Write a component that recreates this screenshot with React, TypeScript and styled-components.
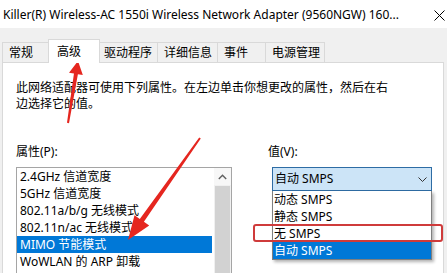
import React from "react";
import styled, { createGlobalStyle } from "styled-components";

const Global = createGlobalStyle`
  html, body { margin: 0; padding: 0; background: #f0f0f0; overflow: hidden; }
  * { box-sizing: border-box; }
`;

const Window = styled.div`
  position: relative;
  width: 447px;
  height: 273px;
  overflow: hidden;
  display: flex;
  flex-direction: column;
  background: #f0f0f0;
  color: #000;
  font-family: "Noto Sans", "Noto Sans CJK SC", sans-serif;
  font-size: 12px;
`;

const TitleBar = styled.div`
  height: 28px;
  flex: none;
  background: #fff;
  display: flex;
  align-items: center;
  justify-content: space-between;
  padding: 2px 2px 0 3px;
`;

const Title = styled.div`
  line-height: 16px;
  white-space: nowrap;
`;

const Close = styled.div`
  width: 12px;
  height: 12px;
  display: flex;
  align-items: center;
  justify-content: center;
`;

const TabStrip = styled.div`
  height: 34px;
  flex: none;
  display: flex;
  align-items: flex-end;
  padding-left: 2px;
  position: relative;
  z-index: 1;
`;

const Tab = styled.div<{ $w: number; $active?: boolean }>`
  width: ${(p) => (p.$active ? p.$w + 4 : p.$w)}px;
  height: ${(p) => (p.$active ? 24 : 20)}px;
  margin: 0 ${(p) => (p.$active ? -3 : -1)}px ${(p) => (p.$active ? -1 : 0)}px
    ${(p) => (p.$active ? -2 : 0)}px;
  padding-left: ${(p) => (p.$active ? 8 : 6)}px;
  border: 1px solid #d9d9d9;
  border-bottom: none;
  background: ${(p) => (p.$active ? "#fff" : "#f0f0f0")};
  display: flex;
  align-items: center;
  line-height: 16px;
  white-space: nowrap;
  position: relative;
  z-index: ${(p) => (p.$active ? 2 : 1)};
`;

const Panel = styled.div`
  flex: 1;
  margin: 0 3px 0 2px;
  border: 1px solid #d9d9d9;
  background: #fff;
  padding: 17px 12px 0 13px;
`;

const Description = styled.p`
  margin: 0;
  width: 376px;
  line-height: 16px;
`;

const Form = styled.div`
  display: flex;
  gap: 36px;
  margin-top: 32px;
`;

const Column = styled.div<{ $w?: number }>`
  display: flex;
  flex-direction: column;
  position: relative;
  width: ${(p) => (p.$w ? `${p.$w}px` : "auto")};
`;

const Label = styled.div`
  line-height: 16px;
  margin-bottom: 7px;
`;

const ListBox = styled.div`
  width: 216px;
  height: 140px;
  border: 1px solid #a5a5a5;
  display: flex;
`;

const ListItems = styled.div`
  flex: 1;
  padding-right: 2px;
`;

const ListItem = styled.div<{ $selected?: boolean }>`
  height: 17px;
  line-height: 17px;
  padding-left: 3px;
  white-space: nowrap;
  background: ${(p) => (p.$selected ? "#0078d7" : "transparent")};
  color: ${(p) => (p.$selected ? "#fff" : "#000")};
`;

const ScrollBar = styled.div`
  width: 17px;
  background: #f0f0f0;
  display: flex;
  flex-direction: column;
`;

const ScrollButton = styled.div`
  height: 17px;
  display: flex;
  align-items: center;
  justify-content: center;
  background: #f7f7f7;
`;

const Thumb = styled.div`
  flex: 1;
  margin: 1px 1px 0 1px;
  background: #d2d2d2;
`;

const ComboWrap = styled.div`
  position: relative;
  margin-left: 4px;
  width: 160px;
`;

const Combo = styled.div`
  height: 24px;
  border: 1px solid #2e6ca4;
  background: #cce4f7;
  display: flex;
  align-items: center;
  justify-content: space-between;
  padding: 0 4px 0 2px;
  line-height: 16px;
`;

const DropList = styled.div`
  position: absolute;
  top: 24px;
  left: 0;
  width: 160px;
  background: #fff;
  border: 1px solid #7f7f7f;
  border-top: none;
  box-shadow: 2px 2px 3px rgba(0, 0, 0, 0.3);
`;

const DropItem = styled.div<{ $selected?: boolean }>`
  height: 17px;
  line-height: 17px;
  padding-left: 1px;
  white-space: nowrap;
  background: ${(p) => (p.$selected ? "#0078d7" : "#fff")};
  color: ${(p) => (p.$selected ? "#fff" : "#000")};
`;

const Highlight = styled.div`
  position: absolute;
  left: -19px;
  top: 57px;
  width: 190px;
  height: 18px;
  border: 2px solid #cf3b3b;
  border-radius: 3px;
`;

const Annotations = styled.svg`
  position: absolute;
  left: 0;
  top: 0;
  width: 447px;
  height: 273px;
  pointer-events: none;
`;

const tabs = [
  { label: "常规", w: 49 },
  { label: "高级", w: 48, active: true },
  { label: "驱动程序", w: 61 },
  { label: "详细信息", w: 61 },
  { label: "事件", w: 49 },
  { label: "电源管理", w: 60 },
];

const properties = [
  "2.4GHz 信道宽度",
  "5GHz 信道宽度",
  "802.11a/b/g 无线模式",
  "802.11n/ac 无线模式",
  "MIMO 节能模式",
  "WoWLAN 的 ARP 卸载",
];

const values = ["动态 SMPS", "静态 SMPS", "无 SMPS", "自动 SMPS"];

export default function App() {
  return (
    <>
      <Global />
      <Window>
        <TitleBar>
          <Title>Killer(R) Wireless-AC 1550i Wireless Network Adapter (9560NGW) 160...</Title>
          <Close>
            <svg width="11" height="11" viewBox="0 0 11 11">
              <path d="M0.5 0.5 L10.5 10.5 M10.5 0.5 L0.5 10.5" stroke="#000" strokeWidth="1" />
            </svg>
          </Close>
        </TitleBar>
        <TabStrip>
          {tabs.map((t) => (
            <Tab key={t.label} $w={t.w} $active={t.active}>
              {t.label}
            </Tab>
          ))}
        </TabStrip>
        <Panel>
          <Description>
            此网络适配器可使用下列属性。在左边单击你想更改的属性，然后在右边选择它的值。
          </Description>
          <Form>
            <Column $w={216}>
              <Label>属性(P):</Label>
              <ListBox>
                <ListItems>
                  {properties.map((p) => (
                    <ListItem key={p} $selected={p === "MIMO 节能模式"}>
                      {p}
                    </ListItem>
                  ))}
                </ListItems>
                <ScrollBar>
                  <ScrollButton>
                    <svg width="9" height="6" viewBox="0 0 9 6">
                      <path d="M0.8 5 L4.5 1.3 L8.2 5" stroke="#606060" strokeWidth="1.4" fill="none" />
                    </svg>
                  </ScrollButton>
                  <Thumb />
                </ScrollBar>
              </ListBox>
            </Column>
            <Column>
              <Label>值(V):</Label>
              <ComboWrap>
                <Combo>
                  <span>自动 SMPS</span>
                  <svg width="9" height="5" viewBox="0 0 9 5">
                    <path d="M0.5 0.5 L4.5 4.5 L8.5 0.5" stroke="#333" strokeWidth="1" fill="none" />
                  </svg>
                </Combo>
                <DropList>
                  {values.map((v) => (
                    <DropItem key={v} $selected={v === "自动 SMPS"}>
                      {v}
                    </DropItem>
                  ))}
                </DropList>
                <Highlight />
              </ComboWrap>
            </Column>
          </Form>
        </Panel>
        <Annotations viewBox="0 0 447 273">
          <polygon
            points="67,122.8 73.96,73.5 69,72.7 78,61 82.8,74.9 77.9,74.2 69,123.2"
            fill="#e5261f"
          />
          <polygon
            points="200.8,138.6 143.9,221.8 149.2,225.6 128,240 134.5,215.2 139.8,219 199.2,137.4"
            fill="#e5261f"
          />
        </Annotations>
      </Window>
    </>
  );
}
